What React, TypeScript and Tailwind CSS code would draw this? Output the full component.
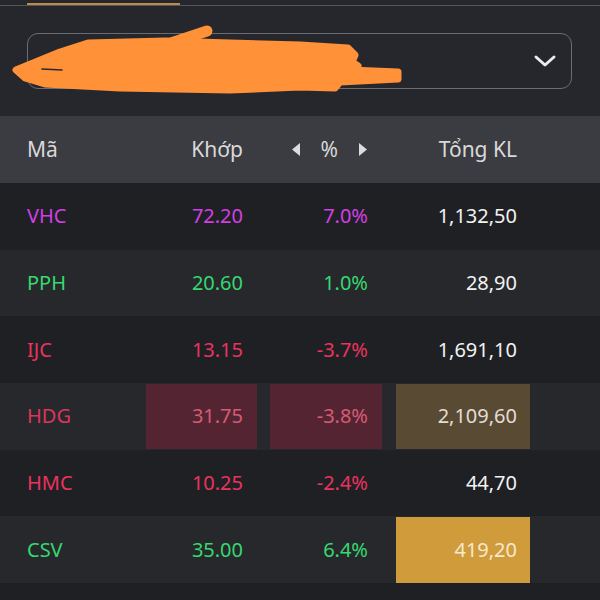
import React from 'react'

type Row = {
  code: string
  price: string
  pct: string
  vol: string
  color: string
  priceBg?: string
  pctBg?: string
  volBg?: string
  cellText?: string
  volText?: string
}

const rows: Row[] = [
  { code: 'VHC', price: '72.20', pct: '7.0%', vol: '1,132,50', color: 'text-[#d23fe4]' },
  { code: 'PPH', price: '20.60', pct: '1.0%', vol: '28,90', color: 'text-[#36d870]' },
  { code: 'IJC', price: '13.15', pct: '-3.7%', vol: '1,691,10', color: 'text-[#ea335e]' },
  {
    code: 'HDG',
    price: '31.75',
    pct: '-3.8%',
    vol: '2,109,60',
    color: 'text-[#dc355c]',
    priceBg: 'bg-[#542433]',
    pctBg: 'bg-[#542433]',
    volBg: 'bg-[#594a34]',
    cellText: 'text-[#d45c74]',
    volText: 'text-[#e2ddd4]',
  },
  { code: 'HMC', price: '10.25', pct: '-2.4%', vol: '44,70', color: 'text-[#ea335e]' },
  {
    code: 'CSV',
    price: '35.00',
    pct: '6.4%',
    vol: '419,20',
    color: 'text-[#36d870]',
    volBg: 'bg-[#d09b3a]',
    volText: 'text-[#f6e9cf]',
  },
]

const Caret = ({ dir }: { dir: 'left' | 'right' }) => (
  <svg width="10" height="15" viewBox="0 0 10 15" className="text-[#dcdcdc]">
    {dir === 'left' ? (
      <path d="M9 1 L1 7.5 L9 14 Z" fill="currentColor" />
    ) : (
      <path d="M1 1 L9 7.5 L1 14 Z" fill="currentColor" />
    )}
  </svg>
)

export default function App() {
  return (
    <div className="relative w-[600px] h-[600px] overflow-hidden bg-[#1f2024] font-['Noto_Sans',sans-serif] text-[20px]">
      {/* top area */}
      <div className="bg-[#26272c] h-[116px] flex flex-col">
        <div className="h-[3px]" />
        <div className="h-[2px] w-[153px] ml-[27px] bg-[#c0894a]" />
        <div className="h-px w-full bg-[#55565b]" />
        <div className="mt-[27px] ml-[27px] mr-[28px] h-[56px] rounded-[11px] border border-[#6b6c71] flex items-center justify-end pr-[14px]">
          <svg width="24" height="16" viewBox="0 0 24 16" className="text-[#ececec]">
            <path d="M3 4 L12 12 L21 4" stroke="currentColor" strokeWidth="3" fill="none" strokeLinecap="round" strokeLinejoin="round" />
          </svg>
        </div>
      </div>

      {/* scribble overlay */}
      <svg className="absolute left-0 top-0" width="600" height="110" viewBox="0 0 600 110">
        <path
          d="M16 70 L60 52 L88 43 L165 41 L230 43 L300 45 L348 48 L355 55 L352 62 L358 66 L350 70 L398 72 L398 79 L340 82 L335 88 L300 87 L230 90 L120 88 L45 84 L25 78 Z"
          fill="#ff9139"
          stroke="#ff9139"
          strokeWidth="7"
          strokeLinejoin="round"
        />
        <path d="M168 44 L207 31" stroke="#ff9139" strokeWidth="11" strokeLinecap="round" />
        <path d="M42 69 L62 70" stroke="#2a2a2e" strokeWidth="1.5" strokeLinecap="round" />
      </svg>

      {/* header */}
      <div className="h-[67px] bg-[#3b3c41] flex items-center text-[#d9d9d9] text-[21px]">
        <div className="w-[146px] pl-[27px]">Mã</div>
        <div className="w-[111px] pr-[14px] text-right">Khớp</div>
        <div className="w-[112px] ml-[13px] pr-[14px] flex items-center justify-end gap-[20px]">
          <Caret dir="left" />
          <span>%</span>
          <Caret dir="right" />
        </div>
        <div className="w-[134px] ml-[14px] pr-[13px] text-right">Tổng KL</div>
      </div>

      {/* rows */}
      {rows.map((r, i) => (
        <div
          key={r.code}
          className={`h-[66.7px] flex items-stretch ${i % 2 === 0 ? 'bg-[#1f2024]' : 'bg-[#27282c]'}`}
        >
          <div className={`w-[146px] pl-[27px] flex items-center ${r.color}`}>{r.code}</div>
          <div
            className={`w-[111px] pr-[14px] flex items-center justify-end my-[0.5px] ${r.priceBg ?? ''} ${
              r.priceBg ? r.cellText : r.color
            }`}
          >
            {r.price}
          </div>
          <div
            className={`w-[112px] ml-[13px] pr-[14px] flex items-center justify-end my-[0.5px] ${r.pctBg ?? ''} ${
              r.pctBg ? r.cellText : r.color
            }`}
          >
            {r.pct}
          </div>
          <div
            className={`w-[134px] ml-[14px] pr-[13px] flex items-center justify-end my-[0.5px] ${r.volBg ?? ''} ${
              r.volText ?? 'text-[#f2f2f2]'
            }`}
          >
            {r.vol}
          </div>
        </div>
      ))}
    </div>
  )
}
